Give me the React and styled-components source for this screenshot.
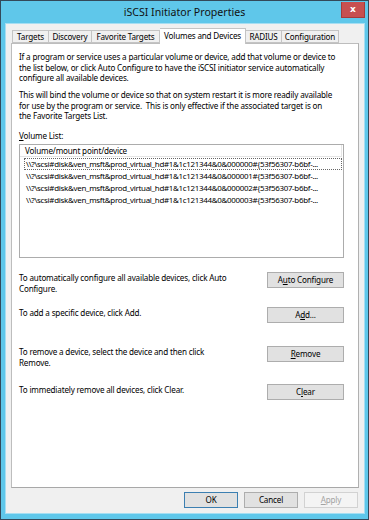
import React from 'react';
import styled, { createGlobalStyle } from 'styled-components';

const Global = createGlobalStyle`
  html, body { margin: 0; padding: 0; background: #ffffff; }
  body { font-family: "Noto Sans", "Open Sans", sans-serif; color: #000; }
  * { box-sizing: border-box; }
`;

const Window = styled.div`
  width: 369px;
  height: 520px;
  border: 1px solid #33495a;
  background: #5fc7ea;
  display: flex;
  flex-direction: column;
`;

const TitleBar = styled.div`
  height: 22px;
  display: grid;
  grid-template-columns: 1fr auto 1fr;
  align-items: start;
`;

const Title = styled.div`
  grid-column: 2;
  font-size: 10.6px;
  line-height: 22px;
  color: #111;
  white-space: nowrap;
`;

const CloseButton = styled.div`
  grid-column: 3;
  justify-self: end;
  margin: 1px 3px 0 0;
  width: 24px;
  height: 16px;
  background: #c75050;
  border: 1px solid #a53b3b;
  border-top: none;
  display: flex;
  align-items: center;
  justify-content: center;
  color: #fff;
  font-family: "DejaVu Sans", sans-serif;
  font-weight: bold;
  font-size: 9px;
  line-height: 1;
`;

const Client = styled.div`
  flex: 1;
  margin: 0 3px 5px 4px;
  border: 1px solid #a6def2;
  background: #f0f0f0;
  padding: 4px 5px 5px 5px;
  display: flex;
  flex-direction: column;
  font-size: 8.1px;
  letter-spacing: -0.17px;
`;

const TabStrip = styled.div`
  height: 15px;
  display: flex;
  align-items: flex-end;
  padding-left: 1px;
  position: relative;
  z-index: 1;
`;

const Tab = styled.div`
  width: ${p => p.$w}px;
  height: ${p => (p.$active ? 16 : 13)}px;
  margin-bottom: ${p => (p.$active ? -1 : 0)}px;
  background: ${p => (p.$active ? '#ffffff' : '#f0f0f0')};
  border: 1px solid #c4c4c4;
  border-bottom: ${p => (p.$active ? 'none' : '1px solid #c4c4c4')};
  border-left-width: ${p => (p.$first ? 1 : 0)}px;
  line-height: ${p => (p.$active ? 14 : 11)}px;
  text-align: center;
  white-space: nowrap;
  overflow: hidden;
`;

const Panel = styled.div`
  height: 445px;
  background: #ffffff;
  border: 1px solid #bdbdbd;
  border-right-color: #b0b0b0;
  border-bottom-color: #a8a8a8;
  padding: 8px 7px 0 7px;
  line-height: 10.5px;
`;

const Para = styled.p`
  margin: 0 0 ${p => p.$mb}px 0;
  white-space: nowrap;
`;

const Label = styled.div`
  margin: 0 0 3px 0;
`;

const Key = styled.span`
  text-decoration: underline;
  text-underline-offset: 1px;
`;

const ListBox = styled.div`
  width: 325px;
  height: 114px;
  border: 1px solid #acacac;
  background: #fff;
  display: flex;
  flex-direction: column;
`;

const ListHeader = styled.div`
  height: 12px;
  border-bottom: 1px solid #e5e5e5;
  border-right: 1px solid #e5e5e5;
  margin-right: 1px;
  padding-left: 5px;
  line-height: 11px;
  white-space: nowrap;
`;

const ListRows = styled.div`
  padding: 1px 1px 0 4px;
  display: flex;
  flex-direction: column;
`;

const ListRow = styled.div`
  height: 12px;
  padding-left: 1px;
  line-height: 10px;
  white-space: nowrap;
  overflow: hidden;
  font-size: 7.95px;
  letter-spacing: -0.3px;
  border: 1px ${p => (p.$focus ? 'dotted #666' : 'solid transparent')};
`;

const Actions = styled.div`
  width: 325px;
  margin-top: 14px;
  display: flex;
  flex-direction: column;
`;

const ActionRow = styled.div`
  height: ${p => p.$h}px;
  display: grid;
  grid-template-columns: 1fr 77px;
  align-items: start;
`;

const ActionText = styled.div`
  padding-top: 1px;
  white-space: nowrap;
`;

const Button = styled.div`
  width: ${p => p.$w || 77}px;
  height: 16px;
  background: ${p => (p.$disabled ? '#f4f4f4' : '#e1e1e1')};
  border: 1px solid ${p => (p.$default ? '#3c7fb1' : p.$disabled ? '#d2d2d2' : '#adadad')};
  color: ${p => (p.$disabled ? '#a3a3a3' : '#000')};
  line-height: 14px;
  text-align: center;
  white-space: nowrap;
`;

const Footer = styled.div`
  margin-top: 4px;
  padding-right: 1px;
  display: flex;
  justify-content: flex-end;
  gap: 6px;
`;

const tabs = [
  { label: 'Targets', w: 37 },
  { label: 'Discovery', w: 43 },
  { label: 'Favorite Targets', w: 68 },
  { label: 'Volumes and Devices', w: 86, active: true },
  { label: 'RADIUS', w: 36 },
  { label: 'Configuration', w: 57 },
];

const devices = ['000000', '000001', '000002', '000003'].map(
  n => `\\\\?\\scsi#disk&ven_msft&prod_virtual_hd#1&1c121344&0&${n}#{53f56307-b6bf-...`
);

export default function App() {
  return (
    <>
      <Global />
      <Window>
        <TitleBar>
          <Title>iSCSI Initiator Properties</Title>
          <CloseButton>x</CloseButton>
        </TitleBar>
        <Client>
          <TabStrip>
            {tabs.map((t, i) => (
              <Tab key={t.label} $w={t.w} $active={t.active} $first={i === 0}>
                {t.label}
              </Tab>
            ))}
          </TabStrip>
          <Panel>
            <Para $mb={6.5}>
              If a program or service uses a particular volume or device, add that volume or device to
              <br />
              the list below, or click Auto Configure to have the iSCSI initiator service automatically
              <br />
              configure all available devices.
            </Para>
            <Para $mb={9}>
              This will bind the volume or device so that on system restart it is more readily available
              <br />
              for use by the program or service.&nbsp; This is only effective if the associated target is on
              <br />
              the Favorite Targets List.
            </Para>
            <Label>
              <Key>V</Key>olume List:
            </Label>
            <ListBox>
              <ListHeader>Volume/mount point/device</ListHeader>
              <ListRows>
                {devices.map((d, i) => (
                  <ListRow key={i} $focus={i === 0}>{d}</ListRow>
                ))}
              </ListRows>
            </ListBox>
            <Actions>
              <ActionRow $h={35}>
                <ActionText>
                  To automatically configure all available devices, click Auto
                  <br />
                  Configure.
                </ActionText>
                <Button>A<Key>u</Key>to Configure</Button>
              </ActionRow>
              <ActionRow $h={39}>
                <ActionText>To add a specific device, click Add.</ActionText>
                <Button>A<Key>d</Key>d...</Button>
              </ActionRow>
              <ActionRow $h={38}>
                <ActionText>
                  To remove a device, select the device and then click
                  <br />
                  Remove.
                </ActionText>
                <Button><Key>R</Key>emove</Button>
              </ActionRow>
              <ActionRow $h={16}>
                <ActionText>To immediately remove all devices, click Clear.</ActionText>
                <Button>C<Key>l</Key>ear</Button>
              </ActionRow>
            </Actions>
          </Panel>
          <Footer>
            <Button $w={54} $default>OK</Button>
            <Button $w={54}>Cancel</Button>
            <Button $w={54} $disabled><Key>A</Key>pply</Button>
          </Footer>
        </Client>
      </Window>
    </>
  );
}
